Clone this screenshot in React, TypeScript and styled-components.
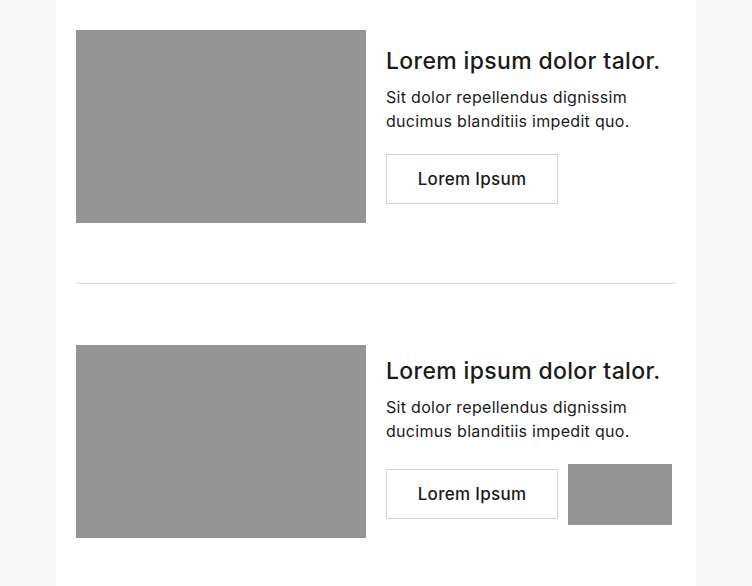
import React from "react";
import styled, { createGlobalStyle } from "styled-components";

const Global = createGlobalStyle`
  html, body { margin: 0; padding: 0; background: #f6f6f6; }
  body { font-family: "Inter", "Lato", sans-serif; color: #1b1b1b; }
`;

const Page = styled.div`
  width: 640px;
  min-height: 586px;
  margin-left: 56px;
  background: #ffffff;
  padding: 30px 20px 0;
  box-sizing: border-box;
`;

const Card = styled.section`
  display: flex;
  align-items: center;
  gap: 20px;
`;

const Picture = styled.div<{ $w: number; $h: number }>`
  width: ${(p) => p.$w}px;
  height: ${(p) => p.$h}px;
  background: #949494;
  flex-shrink: 0;
`;

const Body = styled.div`
  flex: 1;
  padding-bottom: 2px;
`;

const Title = styled.h2`
  margin: 0;
  font-size: 23px;
  font-weight: 500;
  line-height: 28px;
  letter-spacing: 0.35px;
`;

const Text = styled.p`
  margin: 10px 0 0;
  font-size: 16px;
  line-height: 24px;
  letter-spacing: 0.3px;
  max-width: 280px;
`;

const Actions = styled.div`
  display: flex;
  align-items: center;
  gap: 10px;
  margin-top: 21px;
`;

const Button = styled.button`
  width: 172px;
  height: 50px;
  background: #fff;
  border: 1px solid #d3d3d3;
  font-family: inherit;
  font-size: 17px;
  font-weight: 450;
  letter-spacing: 0.3px;
  color: #1b1b1b;
  padding: 0;
`;

const Divider = styled.hr`
  border: 0;
  border-top: 1px solid #d6d6d6;
  margin: 60px 0 61px;
`;

const Item = ({ extra }: { extra?: boolean }) => (
  <Card>
    <Picture $w={290} $h={193} />
    <Body>
      <Title>Lorem ipsum dolor talor.</Title>
      <Text>Sit dolor repellendus dignissim ducimus blanditiis impedit quo.</Text>
      <Actions>
        <Button>Lorem Ipsum</Button>
        {extra && <Picture $w={104} $h={61} />}
      </Actions>
    </Body>
  </Card>
);

export default function App() {
  return (
    <>
      <Global />
      <Page>
        <Item />
        <Divider />
        <Item extra />
      </Page>
    </>
  );
}
